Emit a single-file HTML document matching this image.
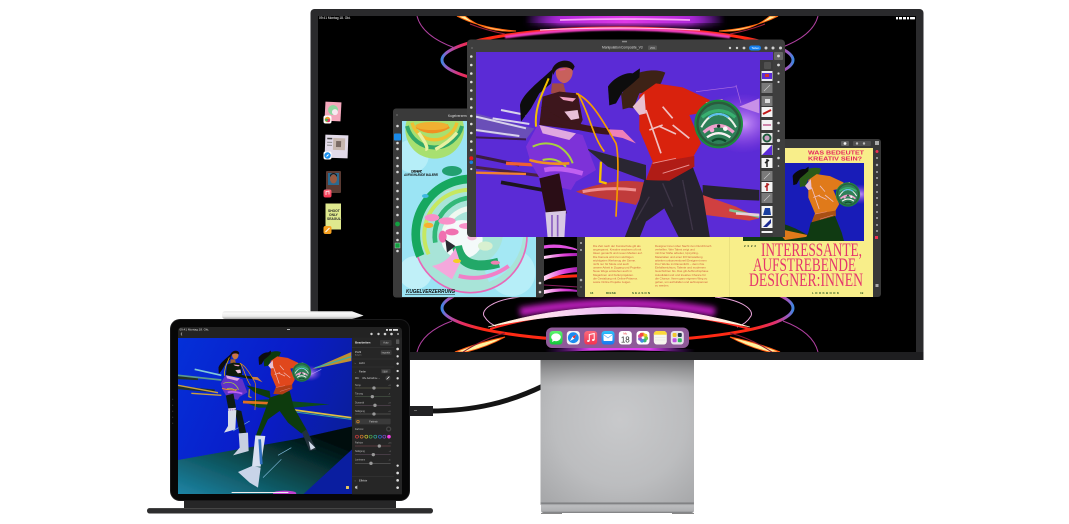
<!DOCTYPE html>
<html lang="de"><head><meta charset="utf-8"><title>iPad und Studio Display</title>
<style>
html,body{margin:0;padding:0;background:#fff;width:1069px;height:524px;overflow:hidden}
svg{display:block;font-family:"Liberation Sans",sans-serif}
</style></head><body>
<svg width="1069" height="524" viewBox="0 0 1069 524" xmlns="http://www.w3.org/2000/svg" xmlns:xlink="http://www.w3.org/1999/xlink">
<defs>
<linearGradient id="ring" gradientUnits="userSpaceOnUse" x1="442" y1="0" x2="793" y2="0">
<stop offset="0" stop-color="#3f86e0"/><stop offset=".012" stop-color="#9060c8"/><stop offset=".05" stop-color="#e03070"/><stop offset=".12" stop-color="#ff2a14"/><stop offset=".88" stop-color="#ff2a14"/><stop offset=".95" stop-color="#e03070"/><stop offset=".988" stop-color="#9060c8"/><stop offset="1" stop-color="#3f86e0"/>
</linearGradient>
<linearGradient id="band" gradientUnits="userSpaceOnUse" x1="490" y1="0" x2="750" y2="0">
<stop offset="0" stop-color="#fff6d0"/><stop offset=".22" stop-color="#ffe0f0"/><stop offset=".5" stop-color="#e8b4f4"/><stop offset=".78" stop-color="#ffe0f0"/><stop offset="1" stop-color="#fff6d0"/>
</linearGradient>
<linearGradient id="topband" gradientUnits="userSpaceOnUse" x1="525" y1="0" x2="725" y2="0">
<stop offset="0" stop-color="#7a20c0" stop-opacity="0"/><stop offset=".18" stop-color="#b028d8"/><stop offset=".5" stop-color="#e038e8"/><stop offset=".82" stop-color="#b028d8"/><stop offset="1" stop-color="#7a20c0" stop-opacity="0"/>
</linearGradient>
<linearGradient id="botband" gradientUnits="userSpaceOnUse" x1="545" y1="0" x2="695" y2="0">
<stop offset="0" stop-color="#7a20c0" stop-opacity="0"/><stop offset=".3" stop-color="#e040f0"/><stop offset=".7" stop-color="#e040f0"/><stop offset="1" stop-color="#7a20c0" stop-opacity="0"/>
</linearGradient>
<linearGradient id="streak" x1="0" y1="0" x2="1" y2="0">
<stop offset="0" stop-color="#ffd8f4"/><stop offset=".6" stop-color="#e040d8"/><stop offset="1" stop-color="#a020b0"/>
</linearGradient>
<radialGradient id="standg" gradientUnits="userSpaceOnUse" cx="620" cy="420" r="110">
<stop offset="0" stop-color="#c8c9cb"/><stop offset=".6" stop-color="#bcbdbf"/><stop offset="1" stop-color="#a7a8aa"/>
</radialGradient>
<linearGradient id="standtop" x1="0" y1="0" x2="0" y2="1">
<stop offset="0" stop-color="#666668" stop-opacity=".85"/><stop offset="1" stop-color="#888" stop-opacity="0"/>
</linearGradient>
<linearGradient id="foot" x1="0" y1="0" x2="0" y2="1">
<stop offset="0" stop-color="#808183"/><stop offset=".25" stop-color="#bcbdbf"/><stop offset=".8" stop-color="#aeafb1"/><stop offset="1" stop-color="#77787a"/>
</linearGradient>
<linearGradient id="pen" x1="0" y1="0" x2="0" y2="1">
<stop offset="0" stop-color="#e4e4e4"/><stop offset=".25" stop-color="#f8f8f8"/><stop offset=".65" stop-color="#ececec"/><stop offset="1" stop-color="#a8a8a8"/>
</linearGradient>
<linearGradient id="ipadbg" x1="0" y1="0" x2="1" y2=".4">
<stop offset="0" stop-color="#0430d8"/><stop offset=".6" stop-color="#0a1cc8"/><stop offset="1" stop-color="#0a1ea0"/>
</linearGradient>
<linearGradient id="floor" x1="0" y1="1" x2="1" y2="0">
<stop offset="0" stop-color="#1e86a8"/><stop offset=".45" stop-color="#0a4a4e"/><stop offset=".85" stop-color="#020a0a"/>
</linearGradient>
<linearGradient id="msg" x1="0" y1="0" x2="0" y2="1"><stop offset="0" stop-color="#5df56c"/><stop offset="1" stop-color="#12c53a"/></linearGradient>
<linearGradient id="mus" x1="0" y1="0" x2="0" y2="1"><stop offset="0" stop-color="#fb6a7c"/><stop offset="1" stop-color="#f43350"/></linearGradient>
<linearGradient id="mail" x1="0" y1="0" x2="0" y2="1"><stop offset="0" stop-color="#2ec4fb"/><stop offset="1" stop-color="#1a76f0"/></linearGradient>
<radialGradient id="glow"><stop offset="0" stop-color="#d8a4ff" stop-opacity=".9"/><stop offset="1" stop-color="#a040e0" stop-opacity="0"/></radialGradient>
<filter id="b1" x="-30%" y="-200%" width="160%" height="500%"><feGaussianBlur stdDeviation="3"/></filter>
<filter id="b2" x="-10%" y="-30%" width="120%" height="160%"><feGaussianBlur stdDeviation=".8"/></filter>
<filter id="b3" x="-10%" y="-10%" width="120%" height="120%"><feGaussianBlur stdDeviation="1"/></filter>
<clipPath id="cMain"><rect x="476" y="52" width="309" height="185"/></clipPath>
<clipPath id="cFresco"><rect x="402" y="121" width="134" height="176"/></clipPath>
<clipPath id="cMag"><rect x="743" y="163" width="121" height="78"/></clipPath>
<clipPath id="cIpad"><rect x="178" y="338" width="174" height="156"/></clipPath>
<clipPath id="cScreen"><rect x="318" y="16" width="598" height="336"/></clipPath>

<g id="orb">
<circle r="70" fill="#2a5a3e" stroke="#1c8a3c" stroke-width="6"/>
<circle r="60" fill="#2f8058"/>
<path d="M-50 -20Q0 -60 50 -20" stroke="#38b070" stroke-width="10" fill="none"/>
<path d="M-52 10Q-30 -30 0 -30Q30 -30 52 10" stroke="#eef2ea" stroke-width="6" fill="none"/>
<path d="M-30 -20Q0 -40 30 -20" stroke="#5ac0f0" stroke-width="6" fill="none"/>
<path d="M-45 25Q0 -15 45 25" stroke="#f0a0cc" stroke-width="10" fill="none"/>
<path d="M-35 40Q0 15 35 40" stroke="#f8f2f2" stroke-width="7" fill="none"/>
<path d="M-20 52Q0 38 22 52" stroke="#0f4a2a" stroke-width="7" fill="none"/>
<circle cx="-20" cy="18" r="7" fill="#f4a8d4"/><circle cx="20" cy="14" r="7" fill="#f8f8f8"/><circle cx="0" cy="6" r="5" fill="#20242a"/>
</g>

<g id="woman">
<path d="M232 55C190 95 140 130 132 165L135 215L165 175L190 130L225 100Z" fill="#0c0808"/>
<path d="M218 85C200 130 175 170 180 230" stroke="#f2c000" stroke-width="6" fill="none"/>
<path d="M228 100L262 100L270 130L225 130Z" fill="var(--skin2)"/>
<path d="M200 140L250 125L305 130L320 210L305 240L190 225Z" fill="var(--top)"/>
<path d="M205 170C210 210 300 235 400 245" stroke="var(--top)" stroke-width="19" fill="none"/>
<path d="M250 140L300 145L290 155L262 150Z" fill="#f0a0c0"/>
<path d="M265 185L305 180L310 205L285 210Z" fill="#e8c0d8"/>
<path d="M398 238L440 240L480 280L440 264L408 258Z" fill="var(--hand)"/>
<path d="M150 290L185 225L320 255L360 360L300 395L285 420L200 400L165 340Z" fill="var(--skirt)"/>
<path d="M190 225L300 250L280 270L200 250Z" fill="#e0a8e0"/>
<path d="M170 290Q210 270 250 290M250 290Q280 310 290 340M200 330Q240 320 270 350" stroke="#a8d040" stroke-width="6" fill="none"/>
<path d="M160 330Q215 345 280 340" stroke="#f09020" stroke-width="8" fill="none"/>
<path d="M205 360Q250 350 320 370" stroke="#c060f0" stroke-width="14" fill="none"/>
<path d="M190 385L250 370L272 490L210 490Z" fill="var(--leg)"/>
<path d="M208 487L270 482L265 565L215 565Z" fill="#d8c8e4"/>
<path d="M228 495V560M245 495V560" stroke="#8a60c0" stroke-width="5"/>
<path d="M228 60C235 30 285 20 296 50L290 62C260 45 240 50 232 75Z" fill="#120c0e"/>
<path d="M240 62C255 48 285 50 290 62C292 85 272 105 258 98C245 92 238 80 240 62Z" fill="var(--skin)"/>
<path d="M250 60L268 58" stroke="#e050a0" stroke-width="4"/>
<path d="M300 130C350 150 390 230 420 280C430 320 425 400 420 500" stroke="#f59a00" stroke-width="5" fill="none"/>
<path d="M305 130C340 190 350 260 385 305" stroke="#f5a800" stroke-width="5" fill="none"/>
<path d="M375 335L372 395L392 400" stroke="#f5c000" stroke-width="7" fill="none"/>
</g>

<g id="man">
<path d="M440 90C490 60 540 55 568 68L555 100L520 125L490 130L472 175L440 170Z" fill="var(--hair)"/>
<path d="M435 130L470 125L470 170L440 178Z" fill="var(--hair)"/>
<path d="M490 135L540 100L620 112L702 150L668 190L640 195L675 280L652 320L655 350L580 392L510 390L530 335L490 240Z" fill="var(--jacket)"/>
<path d="M530 340L655 318L655 350L580 392L510 390Z" fill="var(--jacket2)"/>
<path d="M510 180L555 310M548 228L600 252M560 170L590 205M590 225L640 265M520 240L560 225" stroke="#f0c0c0" stroke-width="5" fill="none"/>
<path d="M530 340L600 325M560 370L640 345" stroke="#e89090" stroke-width="3" fill="none"/>
<path d="M470 170L505 130L510 190L490 195Z" fill="#e8c0d0"/>
<path d="M396 110C410 85 450 65 470 70L492 55L490 82L470 100L440 125L420 160L400 166Z" fill="#0a0a0c"/>
<path d="M690 160L740 150" stroke="#e8a0b0" stroke-width="6"/>
<use xlink:href="#orb" transform="translate(728 222)"/>
</g>
</defs>

<!-- cable behind -->
<path d="M430 411C475 411 510 402 543 386" stroke="#141414" stroke-width="5" fill="none"/>
<rect x="409" y="406" width="24" height="10" fill="#222224"/>
<path d="M414 410.500h3" stroke="#888" stroke-width=".7"/>

<!-- stand -->
<rect x="540.500" y="359" width="153.500" height="146" fill="url(#standg)"/>
<rect x="540.500" y="359" width="153.500" height="28" fill="url(#standtop)"/>
<rect x="541" y="503" width="153" height="10" rx="2.500" fill="url(#foot)"/>
<rect x="540.500" y="502.500" width="153.500" height="1.200" fill="#7a7b7d"/>
<rect x="541" y="513" width="21" height="1" fill="#888"/><rect x="672" y="513" width="22" height="1" fill="#888"/>

<!-- monitor -->
<rect x="310.500" y="9" width="613" height="351" rx="4" fill="#2a2a2c"/>
<rect x="310.500" y="352" width="613" height="8" fill="#1e1e20"/>
<rect x="318" y="16" width="598" height="336" fill="#000"/>

<!-- wallpaper -->
<g clip-path="url(#cScreen)">
<rect x="525" y="15" width="200" height="11" fill="url(#topband)" filter="url(#b1)"/>
<rect x="525" y="16" width="200" height="7" fill="url(#topband)"/>
<path d="M560 20Q620 18 690 20" stroke="#f8a0f8" stroke-width="1.800" fill="none"/>
<ellipse cx="617.500" cy="60" rx="175.500" ry="32" fill="none" stroke="url(#ring)" stroke-width="3"/>
<path d="M505 37Q620 21 730 37" stroke="#f040c0" stroke-width="3" fill="none" filter="url(#b2)"/>
<path d="M540 30Q620 26 700 30" stroke="#ffc0ec" stroke-width="1.200" fill="none"/>
<path d="M457 16Q480 28 516 31Q485 33 465 16Z" fill="#fff2a0" stroke="#ff6a10" stroke-width="1"/>
<path d="M778 16Q755 28 719 31Q750 33 770 16Z" fill="#fff2a0" stroke="#ff6a10" stroke-width="1"/>
<path d="M417 16Q422 36 455 48" stroke="#b040a0" stroke-width="1" fill="none"/>
<path d="M818 16Q813 36 780 48" stroke="#b040a0" stroke-width="1" fill="none"/>
<path d="M470 24Q485 30 505 34M765 24Q750 30 730 34" stroke="#a02040" stroke-width="1" fill="none"/>

<path d="M520 297C492 300 481 310 484 316C487 321 492 325 498 327M715 297C743 300 754 310 751 316C748 321 743 325 737 327" fill="none" stroke="#eca4dc" stroke-width="1"/>
<path d="M520 312Q620 295 715 312" stroke="#d020d0" stroke-width="9" fill="none" filter="url(#b1)" opacity=".9"/>
<path d="M490 329Q530 317 575 313M750 329Q705 317 660 313" stroke="#ff2a20" stroke-width="2" fill="none"/>
<path d="M488 327Q620 287 750 327Q620 300 488 327Z" fill="url(#band)" stroke="url(#band)" stroke-width=".6"/>
<ellipse cx="617.500" cy="308" rx="175.500" ry="33" fill="none" stroke="url(#ring)" stroke-width="3"/>
<path d="M455 352Q480 342 505 337Q487 347 466 352Z" fill="#fff3a0" stroke="#ff5a10" stroke-width="1"/>
<path d="M780 352Q755 342 730 337Q748 347 769 352Z" fill="#fff3a0" stroke="#ff5a10" stroke-width="1"/>
<path d="M417 352Q422 332 452 321" stroke="#b040a0" stroke-width="1" fill="none"/>
<path d="M818 352Q813 332 783 321" stroke="#b040a0" stroke-width="1" fill="none"/>
<path d="M463 352Q485 338 505 333M772 352Q750 338 730 333" stroke="#8a1a3a" stroke-width="1" fill="none"/>
<path d="M545 351Q620 346 695 351" stroke="url(#botband)" stroke-width="3.500" fill="none"/>
</g>

<!-- stage manager -->
<g>
<g transform="rotate(3 333 111)">
<rect x="325" y="102" width="16" height="19" fill="#f4a8bc"/>
<circle cx="333" cy="110" r="5" fill="#8fd8a0"/><circle cx="335" cy="112" r="3" fill="#f8e8f0"/>
</g>
<rect x="323.500" y="115.500" width="8" height="8" rx="2" fill="#fff"/>
<circle cx="327.500" cy="119.500" r="2.800" fill="#f0a030"/><circle cx="328.500" cy="120.500" r="1.600" fill="#e03070"/><circle cx="326.500" cy="120" r="1.400" fill="#40b060"/>
<g transform="rotate(2 336 146)">
<rect x="325" y="135" width="23" height="23" fill="#e2dae8"/>
<rect x="333" y="138" width="12" height="12" fill="#c8b8b0"/><rect x="327" y="138" width="5" height="1.500" fill="#444"/><rect x="327" y="142" width="5" height="1" fill="#888"/><rect x="327" y="145" width="5" height="1" fill="#888"/><rect x="336" y="141" width="5" height="6" fill="#7a6a64"/>
</g>
<rect x="323.500" y="151.500" width="8" height="8" rx="2" fill="#fff"/><circle cx="327.500" cy="155.500" r="3.200" fill="#1a90f0"/><path d="M326 157L327 155L329 154L328 156Z" fill="#fff"/>
<rect x="326" y="171" width="15" height="22" rx="1" fill="#5a3a32"/>
<rect x="328" y="173" width="11" height="12" fill="#2a6a90"/><ellipse cx="333.500" cy="179" rx="3.500" ry="4.500" fill="#9a5a40"/><path d="M330 177Q333.500 171 337 177L337 175Q333.500 171 330 175Z" fill="#1a1210"/>
<rect x="323.500" y="189.500" width="8" height="8" rx="2" fill="url(#mus)"/><path d="M326 195V191.500L329 191V194.500" stroke="#fff" stroke-width=".7" fill="none"/>
<rect x="325.500" y="203.500" width="15.500" height="26" fill="#dfe98e"/>
<text x="328" y="212" font-size="3.300" font-weight="700" fill="#222">SHOOT</text><text x="329" y="216" font-size="3.300" font-weight="700" fill="#222">ONLY</text><text x="327" y="220" font-size="3.300" font-weight="700" fill="#222">SEAGULL</text>
<rect x="323.500" y="226" width="8" height="8" rx="2" fill="#f6a020"/><path d="M325.500 232L329.500 228" stroke="#fff" stroke-width="1"/>
</g>

<!-- between-window streaks -->
<g>
<path d="M544 246Q560 243 578 250Q560 246 544 248Z" fill="#e050e0" stroke="#e050e0" stroke-width="1.200"/>
<path d="M544 256Q560 253 578 253L578 256Q560 256 544 259Z" fill="url(#streak)"/>
<path d="M544 276Q560 268 578 267L578 272Q560 273 544 281Z" fill="url(#streak)"/>
<path d="M544 290Q560 287 578 290L578 292Q560 290 544 294Z" fill="url(#streak)"/>
<path d="M544 285L578 287" stroke="#8a2060" stroke-width="1"/>
</g>

<!-- fresco window -->
<rect x="393" y="108.500" width="151" height="189" rx="3" fill="#3a3a3a"/>
<rect x="402" y="121" width="134" height="176" fill="#9be4f4"/>
<g clip-path="url(#cFresco)"><g transform="translate(392 106) scale(.3333)" filter="url(#b3)">
<circle cx="60" cy="150" r="50" fill="#b6eef8"/><circle cx="360" cy="500" r="70" fill="#b6eef8"/><circle cx="70" cy="500" r="50" fill="#c0f0f8"/>
<circle cx="128" cy="70" r="88" fill="#a8e070"/>
<path d="M45 60A85 85 0 0 0 210 60" stroke="#30a868" stroke-width="12" fill="none"/>
<path d="M60 50A70 70 0 0 0 195 50" stroke="#f0c030" stroke-width="10" fill="none"/>
<path d="M75 60Q120 90 170 60" stroke="#f09020" stroke-width="14" fill="none"/>
<path d="M80 80Q115 130 100 130" stroke="#e8f0a0" stroke-width="10" fill="none"/>
<path d="M130 130Q170 110 195 80" stroke="#e8f0a0" stroke-width="10" fill="none"/>
<ellipse cx="120" cy="60" rx="50" ry="12" fill="#f0b030"/>
<ellipse cx="180" cy="195" rx="30" ry="15" fill="#20a070"/>
<circle cx="235" cy="390" r="170" fill="#a8e4d8" stroke="#e868b8" stroke-width="5"/>
<path d="M85 450A165 165 0 0 1 280 225" stroke="#18a860" stroke-width="26" fill="none"/>
<path d="M110 445A135 135 0 0 1 290 265" stroke="#c6e860" stroke-width="12" fill="none"/>
<path d="M130 410A115 115 0 0 1 300 290" stroke="#30b878" stroke-width="14" fill="none"/>
<path d="M155 395A90 90 0 0 1 270 310" stroke="#f0f8f0" stroke-width="16" fill="none"/>
<ellipse cx="210" cy="400" rx="62" ry="58" fill="#f4fafa"/>
<path d="M360 350A130 130 0 0 1 280 500" stroke="#a4e8f4" stroke-width="60" fill="none"/>
<path d="M195 420Q210 500 320 470" stroke="#20a868" stroke-width="30" fill="none"/>
<path d="M190 425L205 470L180 520L120 480Q170 470 190 425Z" fill="#f4a8dc"/>
<path d="M200 510Q280 530 350 480" stroke="#f080c8" stroke-width="12" fill="none"/>
<ellipse cx="120" cy="335" rx="22" ry="11" fill="#f890c8"/><ellipse cx="110" cy="358" rx="14" ry="8" fill="#f8b030"/><ellipse cx="165" cy="345" rx="26" ry="11" fill="#f890c8"/><ellipse cx="180" cy="378" rx="20" ry="10" fill="#f070b0"/><ellipse cx="225" cy="360" rx="24" ry="9" fill="#f890c8"/><ellipse cx="152" cy="392" rx="12" ry="18" fill="#f070b0"/><ellipse cx="240" cy="395" rx="14" ry="8" fill="#f4b8d8"/>
<path d="M160 400L190 420L165 440Z" fill="#2a2a30"/>
<ellipse cx="195" cy="465" rx="12" ry="6" fill="#f4d020"/><ellipse cx="310" cy="470" rx="14" ry="6" fill="#f080b0"/><ellipse cx="280" cy="420" rx="22" ry="14" fill="#d8f0d0"/>
<ellipse cx="100" cy="270" rx="10" ry="6" fill="#40b8e0"/>
</g>
<text x="411" y="172.500" font-size="3.400" font-weight="700" font-style="italic" fill="#111" textLength="11">DAS HERZ</text>
<text x="404" y="176" font-size="3.200" font-weight="700" font-style="italic" fill="#111" textLength="34" lengthAdjust="spacingAndGlyphs">AUFWÜHLENDE MALEREI</text>
<text x="406" y="293" font-size="5.600" font-weight="700" font-style="italic" fill="#111" textLength="49" lengthAdjust="spacingAndGlyphs">KUGELVERZERRUNG</text>
<path d="M405 294.700H455" stroke="#111" stroke-width=".5"/>
</g>
<text x="448" y="117" font-size="3.200" fill="#ddd">Kugelverzerrung</text>
<path d="M397.500 114l-1 1 1 1" stroke="#aaa" stroke-width=".5" fill="none"/>
<rect x="394" y="133.500" width="7" height="7" rx="1" fill="#1a8ae8"/>
<g fill="#d8d8d8"><circle cx="397.500" cy="126" r="1.300"/><circle cx="397.500" cy="143" r="1.300"/><circle cx="397.500" cy="149" r="1.300"/><circle cx="397.500" cy="158" r="1.300"/><circle cx="397.500" cy="166" r="1.300"/><circle cx="397.500" cy="172" r="1.300"/><circle cx="397.500" cy="183" r="1.300"/><circle cx="397.500" cy="191" r="1.300"/><circle cx="397.500" cy="199" r="1.300"/><circle cx="397.500" cy="207" r="1.300"/><circle cx="397.500" cy="215" r="1.300"/><circle cx="397.500" cy="233" r="1.300"/><circle cx="397.500" cy="240" r="1.300"/><circle cx="397.500" cy="251" r="1.300"/><circle cx="540" cy="283" r="1.300"/><circle cx="540" cy="292" r="1.300"/></g>
<circle cx="397.500" cy="224" r="2.400" fill="#12a040"/>
<rect x="395" y="243" width="5" height="5" fill="#12a040" stroke="#ddd" stroke-width=".4"/>

<!-- magazine window -->
<rect x="577" y="139" width="304" height="158" rx="3" fill="#383838"/>
<rect x="585" y="148" width="288" height="149" fill="#f8ee8a"/>
<rect x="743" y="163" width="121" height="78" fill="#181cb8"/>
<g clip-path="url(#cMag)">
<path d="M743 225Q775 212 815 240L743 245Z" fill="#123a14"/>
<path d="M775 228L812 236L785 240Z" fill="#e07a1a"/>
<g transform="translate(775 135) scale(.3333)"><g transform="translate(-145 67.500) scale(.5)" style="--jacket:#e07a1a;--jacket2:#a85014;--hair:#2a5a18">
<ellipse cx="800" cy="220" rx="100" ry="60" fill="url(#glow)"/>
<use xlink:href="#man"/>
<path d="M505 390L650 350L690 450L720 560L440 560L490 450Z" fill="#103a12"/>
</g></g>
</g>
<text x="808" y="154.500" font-size="5.200" font-weight="700" fill="#e5265e" textLength="56" lengthAdjust="spacingAndGlyphs">WAS BEDEUTET</text>
<text x="808" y="160.300" font-size="5.200" font-weight="700" fill="#e5265e" textLength="54" lengthAdjust="spacingAndGlyphs">KREATIV SEIN?</text>
<g font-family="'Liberation Serif',serif" font-size="19" fill="#e5366c">
<text x="761" y="256" textLength="101" lengthAdjust="spacingAndGlyphs">INTERESSANTE,</text>
<text x="753" y="271" textLength="103" lengthAdjust="spacingAndGlyphs">AUFSTREBENDE</text>
<text x="749" y="286" textLength="114" lengthAdjust="spacingAndGlyphs">DESIGNER:INNEN</text>
</g>
<path d="M729.500 237V297" stroke="#e2d878" stroke-width=".6"/>
<text x="744" y="247" font-size="3" font-weight="700" fill="#26461e" textLength="12">2022</text>
<g font-size="2.900" fill="#d2603c">
<text x="593" y="247">Die Zeit nach der Kunstschule gilt als</text>
<text x="593" y="250.600">angespannt. Kreative wachsen oft mit</text>
<text x="593" y="254.200">Ideen gemacht und neuen Medien auf.</text>
<text x="593" y="257.800">Die Kamera wird zum wichtigen</text>
<text x="593" y="261.400">wichtigsten Werkzeug der Szene.</text>
<text x="593" y="265">nicht nur für Mode und auch</text>
<text x="593" y="268.600">unsere Arbeit in Zugang und Projekte.</text>
<text x="593" y="272.200">Neue Wege entstehen auch in</text>
<text x="593" y="275.800">Magazinen und Kulturprojekten.</text>
<text x="593" y="279.400">die Gestaltung mit Online-Präsenz.</text>
<text x="593" y="283">sowie Online Projekte zeigen.</text>
<text x="655" y="247">Designer:innen über Nacht zum Durchbruch</text>
<text x="655" y="250.600">verhelfen. Wer Talent zeigt und</text>
<text x="655" y="254.200">mit ihrer Nähe arbeitet, Upcycling-</text>
<text x="655" y="257.800">Materialien und einer DIY-Einstellung</text>
<text x="655" y="261.400">arbeiten unkonventionell Designer:innen</text>
<text x="655" y="265">ihrer Werke im Ramenlicht – denn ihre</text>
<text x="655" y="268.600">Einfallsreichtum, Talente und modernen</text>
<text x="655" y="272.200">Geschichten bis. Das gilt Aufbruchsphase</text>
<text x="655" y="275.800">Autodidakt und und kreative Chance für</text>
<text x="655" y="279.400">die Chance. Ihnen ganz eigenen Weg zu</text>
<text x="655" y="283">gehen, um aufzufallen und aufzuspannen</text>
<text x="655" y="286.600">zu werden.</text>
</g>
<g font-size="3" font-weight="700" fill="#26561e">
<text x="590" y="294">16</text><text x="606" y="294" textLength="10">DIESE</text><text x="632" y="294" textLength="18">SEASON</text>
<text x="812" y="294" textLength="27">LOOKBOOK</text><text x="860" y="294">19</text>
</g>
<rect x="841" y="141" width="8" height="5" rx="1" fill="#606060"/><rect x="853" y="141" width="18" height="5" rx="1" fill="#505050"/>
<circle cx="845" cy="143.500" r="1.400" fill="#eee"/><circle cx="857" cy="143.500" r="1.200" fill="#bbb"/><circle cx="864" cy="143.500" r="1.200" fill="#bbb"/>
<rect x="875" y="141" width="4" height="4" fill="#aaa"/>
<circle cx="877" cy="151.500" r="1.500" fill="#f03050"/>
<g fill="#b0b0b0"><circle cx="877" cy="158" r="1"/><circle cx="877" cy="165" r="1.200"/><circle cx="877" cy="172" r="1"/><circle cx="877" cy="178" r="1"/><circle cx="877" cy="185" r="1"/><circle cx="877" cy="192" r="1"/><circle cx="877" cy="198" r="1"/><circle cx="877" cy="205" r="1"/><circle cx="877" cy="212" r="1"/><circle cx="877" cy="218" r="1"/><circle cx="877" cy="225" r="1"/><circle cx="877" cy="231" r="1"/><circle cx="581" cy="243" r="1"/><circle cx="581" cy="250" r="1"/><circle cx="581" cy="280" r="1.300"/><circle cx="581" cy="287" r=".6"/></g>
<rect x="875" y="236" width="3" height="3" fill="#f03050"/><rect x="875.500" y="284" width="3" height="3" fill="#aaa"/>

<!-- main window -->
<rect x="467" y="39.500" width="318" height="197.500" rx="4" fill="#3e3e3e"/>
<rect x="476" y="52" width="309" height="185" fill="#5b2bd6"/>
<g clip-path="url(#cMain)"><g transform="translate(476 50) scale(.3333)" filter="url(#b2)">
<ellipse cx="800" cy="220" rx="120" ry="90" fill="url(#glow)"/>
<path d="M0 190C60 205 120 225 175 235L150 268C100 260 40 250 0 245Z" fill="#6a50b8"/>
<path d="M0 200L150 235M0 240L130 258M75 180L150 195M50 205L160 222" stroke="#d8d2ec" stroke-width="6" fill="none"/>
<path d="M0 262L150 268" stroke="#3a1a50" stroke-width="6"/>
<path d="M0 318L130 345" stroke="#3a1a40" stroke-width="9"/>
<path d="M0 352L200 378" stroke="#4a2040" stroke-width="9"/>
<path d="M0 368L150 372" stroke="#f08030" stroke-width="7"/>
<path d="M90 340L180 345" stroke="#f06030" stroke-width="10"/>
<path d="M75 397L200 420" stroke="#1e141f" stroke-width="11"/>
<path d="M330 295L510 345L510 392L395 350Z" fill="#2b2630"/>
<path d="M300 425C380 395 450 385 520 400L480 465C420 450 350 445 300 425Z" fill="#c03a3a"/>
<path d="M320 425Q400 410 480 420" stroke="#f09090" stroke-width="9" fill="none"/>
<path d="M680 405L850 420L850 452L680 445Z" fill="#26222e"/>
<path d="M680 435L780 470L850 505L820 512L690 495Z" fill="#d04040"/>
<path d="M760 480L850 500" stroke="#80c090" stroke-width="8"/><path d="M780 490L850 495" stroke="#e8d0d8" stroke-width="8"/>
<path d="M780 105L795 160M660 125L780 110" stroke="#b070e0" stroke-width="2" fill="none"/>
<path d="M790 170L850 145L850 190Z" fill="#c890e8"/>
<g style="--skin:#c8605c;--skin2:#a04844;--top:#3c131a;--hand:#ee80b8;--skirt:#7d32d8;--leg:#2a0e12"><use xlink:href="#woman"/></g>
<path d="M505 390L650 350L680 430L702 565L610 565L565 475L510 515L490 565L445 565L490 450Z" fill="#26202e"/>
<path d="M560 400L590 470M620 390L650 540M480 510L520 440" stroke="#3e3646" stroke-width="4" fill="none"/>
<g style="--jacket:#d9200f;--jacket2:#b01a14;--hair:#3c2118"><use xlink:href="#man"/></g>
</g></g>
<!-- main chrome -->
<text x="602" y="48.500" font-size="3.300" fill="#ddd">Manipulation</text>
<text x="621" y="48.500" font-size="3.300" fill="#ddd">Composite_V3</text>
<rect x="648" y="45.500" width="9" height="4.500" rx="1" fill="#555"/>
<text x="650" y="48.800" font-size="2.600" fill="#ccc">25%</text>
<rect x="622" y="40.800" width="5" height="1.500" fill="#888"/>
<rect x="749" y="45.500" width="12" height="5" rx="2.500" fill="#1480f0"/>
<text x="751.500" y="49" font-size="3" fill="#fff">Teilen</text>
<g fill="#cfcfcf"><circle cx="730" cy="48" r="1.200"/><circle cx="737" cy="48" r="1.200"/><circle cx="744" cy="48" r="1.400"/><circle cx="766" cy="48" r="1.500"/><circle cx="773" cy="48" r="1.500"/><circle cx="780.500" cy="48" r="1.500"/></g>
<rect x="760" y="60" width="13" height="177" fill="#3a3a3a"/>
<rect x="773" y="52" width="12" height="185" fill="#3e3e3e"/>
<rect x="764" y="62" width="7" height="7" rx="1" fill="#505050"/>
<rect x="761.500" y="71" width="11" height="10" fill="#e8e8f0"/><rect x="762" y="73" width="10" height="6" fill="#5b2bd6"/><rect x="765" y="74" width="4" height="3" fill="#d03030"/>
<rect x="761.500" y="83" width="11" height="10" fill="#7a7a7a"/><path d="M764 91L770 85" stroke="#ccc" stroke-width=".6"/>
<rect x="761.500" y="96" width="11" height="10" fill="#7a7a7a"/><rect x="765" y="99" width="5" height="4" fill="#ddd"/>
<rect x="761.500" y="107" width="11" height="10" fill="#f4f4f4"/><path d="M763 114L771 110" stroke="#c01818" stroke-width="2"/>
<rect x="761.500" y="120" width="11" height="10" fill="#f4f4f4"/><path d="M763 125H771" stroke="#c06090" stroke-width="1.500"/>
<rect x="761.500" y="133" width="11" height="10" fill="#e8e8e8"/><circle cx="767" cy="138" r="4.500" fill="#1c5a3a"/><circle cx="767" cy="138" r="2.600" fill="#c8a0c0"/>
<rect x="761.500" y="145" width="11" height="10" fill="#f4f4f4"/><path d="M762 155L772 145V155Z" fill="#5b2bd6"/>
<rect x="761.500" y="158" width="11" height="10" fill="#f4f4f4"/><path d="M767 159V167M765 163L769 160" stroke="#222" stroke-width="1.500"/>
<rect x="761.500" y="171" width="11" height="10" fill="#7a7a7a"/><path d="M764 179L770 173" stroke="#ccc" stroke-width=".6"/>
<rect x="761.500" y="182" width="11" height="10" fill="#f4f4f4"/><path d="M767 183V191M765 187L769 184" stroke="#b02020" stroke-width="1.500"/>
<rect x="761.500" y="193" width="11" height="10" fill="#7a7a7a"/><path d="M764 201L770 195" stroke="#ccc" stroke-width=".6"/>
<rect x="761.500" y="206" width="11" height="10" fill="#f4f4f4"/><path d="M763 215L765 208H770L771 215Z" fill="#1a40a0"/>
<rect x="761.500" y="218" width="11" height="10" fill="#f4f4f4"/><path d="M763 227L771 219V223L767 227Z" fill="#1a2a90"/>
<rect x="761.500" y="231" width="11" height="2" fill="#f4f4f4"/>
<rect x="774" y="52" width="9" height="8" rx="1" fill="#666"/>
<g fill="#d8d8d8"><circle cx="778.500" cy="56" r="1.400"/><circle cx="778.500" cy="65" r="1.400"/><circle cx="778.500" cy="73.500" r="1.100"/><circle cx="778.500" cy="82" r="1.100"/><circle cx="778.500" cy="123" r="1.300"/><circle cx="778.500" cy="131" r="1"/><circle cx="778.500" cy="140.500" r="1.600"/><circle cx="778.500" cy="149" r="1"/><circle cx="778.500" cy="158" r="1.300"/><circle cx="778.500" cy="166" r=".8"/></g>
<path d="M472.500 47l-1 1 1 1" stroke="#aaa" stroke-width=".5" fill="none"/>
<g fill="#dcdcdc"><circle cx="471.300" cy="56.500" r="1.300"/><circle cx="471.300" cy="65" r="1.300"/><circle cx="471.300" cy="73.500" r="1.300"/><circle cx="471.300" cy="82" r="1.300"/><circle cx="471.300" cy="90.500" r="1.300"/><circle cx="471.300" cy="99" r="1.300"/><circle cx="471.300" cy="107.500" r="1.300"/><circle cx="471.300" cy="116" r="1.300"/><circle cx="471.300" cy="124" r="1.300"/><circle cx="471.300" cy="133" r="1.300"/><circle cx="471.300" cy="141.500" r="1.300"/><circle cx="471.300" cy="150" r="1.300"/><circle cx="471.300" cy="169" r="1.100"/></g>
<circle cx="471.300" cy="158.300" r="2" fill="#e81818"/><circle cx="471.300" cy="162.300" r="1.800" fill="#1880d8"/>

<!-- status bar -->
<text x="319" y="19" font-size="3.200" fill="#fff">09:41  Montag 18. Okt.</text>
<g fill="#fff"><rect x="896" y="17" width="2" height="2.400"/><rect x="899" y="17" width="3" height="2.400"/><rect x="903" y="17" width="3" height="2.400"/><rect x="907" y="17" width="2" height="2.400"/><rect x="910" y="17" width="5" height="2.400" rx=".5"/></g>

<!-- dock -->
<rect x="546" y="327.500" width="143" height="20.500" rx="6" fill="#8f5a99"/>
<rect x="549.500" y="331" width="13" height="13.500" rx="3.200" fill="url(#msg)"/>
<ellipse cx="556" cy="337.300" rx="4.800" ry="3.900" fill="#fff"/><path d="M552.500 340L552 342L555 340.500Z" fill="#fff"/>
<rect x="566.800" y="331" width="13" height="13.500" rx="3.200" fill="#f4f4f6"/>
<circle cx="573.300" cy="337.700" r="5.400" fill="#1a8cf0"/><path d="M570 341L572.300 336.700L576.500 334.500L574.300 338.700Z" fill="#fff"/><path d="M572.300 336.700L576.500 334.500L574.300 338.700Z" fill="#f03030"/>
<rect x="584.200" y="331" width="13" height="13.500" rx="3.200" fill="url(#mus)"/>
<path d="M589.300 341V334.500L594.200 333.500V340" stroke="#fff" stroke-width="1" fill="none"/><ellipse cx="588.300" cy="341" rx="1.300" ry="1" fill="#fff"/><ellipse cx="593.200" cy="340" rx="1.300" ry="1" fill="#fff"/>
<rect x="601.500" y="331" width="13" height="13.500" rx="3.200" fill="url(#mail)"/>
<rect x="603.500" y="334" width="9" height="7" rx=".7" fill="#fff"/><path d="M603.500 334.500L608 338L612.500 334.500" stroke="#5aa8f0" stroke-width=".6" fill="none"/>
<rect x="618.800" y="331" width="13" height="13.500" rx="3.200" fill="#fff"/>
<text x="625.300" y="334.600" font-size="2.800" fill="#f03030" text-anchor="middle">Mo</text>
<text x="625.300" y="342.500" font-size="8" fill="#333" text-anchor="middle">18</text>
<rect x="636.500" y="331" width="13" height="13.500" rx="3.200" fill="#fff"/>
<g transform="translate(643 337.700)"><circle cx="0" cy="-3.200" r="1.900" fill="#f5a623"/><circle cx="2.500" cy="-2" r="1.900" fill="#e8d020"/><circle cx="3.200" cy=".6" r="1.900" fill="#7cc840"/><circle cx="1.700" cy="2.800" r="1.900" fill="#38b878"/><circle cx="-1" cy="3.100" r="1.900" fill="#4090e0"/><circle cx="-3" cy="1.200" r="1.900" fill="#8060d0"/><circle cx="-3.100" cy="-1.500" r="1.900" fill="#d850a0"/><circle cx="-1.500" cy="-3" r="1.900" fill="#f04848"/></g>
<rect x="653.800" y="331" width="13" height="13.500" rx="3.200" fill="#f6f6ee"/>
<path d="M653.800 334.200a3.200 3.200 0 0 1 3.200-3.200h6.600a3.200 3.200 0 0 1 3.200 3.200v.6h-13z" fill="#fcd83a"/>
<path d="M655 337.500h10.500M655 340h10.500" stroke="#ddd" stroke-width=".5"/>
<rect x="670.800" y="331" width="13" height="13.500" rx="3.200" fill="#e8e2ec"/>
<rect x="672.600" y="333" width="4" height="4" rx="1" fill="#f0c830"/><rect x="677.800" y="333" width="4" height="4" rx="1" fill="#2a3a50"/><rect x="672.600" y="338.300" width="4" height="4" rx="1" fill="#c050e0"/><rect x="677.800" y="338.300" width="4" height="4" rx="1" fill="#30b860"/>

<!-- pencil -->
<path d="M225 311.200H352L363.500 315.500Q362 316.200 352 319H225Q222 319 222 315Q222 311.200 225 311.200Z" fill="url(#pen)"/>

<!-- keyboard -->
<rect x="184" y="500" width="212" height="9" fill="#262627"/>
<rect x="147" y="508" width="286" height="5.500" rx="2.600" fill="#2d2d2e"/>
<rect x="149" y="508" width="282" height="1" fill="#454545"/>

<!-- ipad -->
<rect x="170" y="319" width="240" height="182" rx="10" fill="#1a1a1b"/>
<rect x="171" y="320" width="238" height="180" rx="9" fill="#070707"/>
<rect x="178" y="327" width="224" height="167" rx="4" fill="#232323"/>
<rect x="178" y="338" width="174" height="156" fill="url(#ipadbg)"/>
<g clip-path="url(#cIpad)"><g transform="translate(178 336) scale(.3333)" filter="url(#b3)">
<path d="M0 372L350 310L528 270L528 335L370 480L0 480Z" fill="url(#floor)"/>
<path d="M300 358L340 335M215 255L165 285M255 425L310 370" stroke="#7fb8d8" stroke-width="2"/>
<path d="M0 125L60 128M0 155L110 165" stroke="#203028" stroke-width="9"/>
<path d="M50 100L130 118" stroke="#80c8d8" stroke-width="5"/>
<path d="M0 118L130 132" stroke="#5a9890" stroke-width="5" fill="none"/>
<path d="M0 148L120 170M40 172L130 178" stroke="#c8a040" stroke-width="4" fill="none"/>
<path d="M400 100L520 48L520 75Z" fill="#c09030"/><path d="M410 96L520 62" stroke="#40b0a0" stroke-width="4"/>
<path d="M190 195L270 190L455 205L350 215L240 215Z" fill="#0e4a1a"/>
<path d="M195 198L340 205" stroke="#e07020" stroke-width="8"/>
<path d="M350 222L520 245" stroke="#e0c040" stroke-width="5"/><path d="M352 228L520 250" stroke="#30a0a0" stroke-width="3"/>
<path d="M205 148L275 165L278 188L230 170Z" fill="#0e3a10"/>
<path d="M400 115L430 100" stroke="#90a0f0" stroke-width="2"/>
<ellipse cx="395" cy="112" rx="36" ry="24" fill="url(#glow)"/>
<g transform="translate(71.300 32.200) scale(.38)" style="--skin:#c87840;--skin2:#a06030;--top:#0b1a10;--hand:#d08040;--skirt:#6030c8;--leg:#0c1c12"><use xlink:href="#woman"/></g>
<path d="M170 220L190 225L205 292L185 292Z" fill="#0c1c12"/>
<path d="M182 292L210 290L212 345L165 358L185 335Z" fill="#c8d0e0"/>
<path d="M150 225L175 222L172 280L138 290L150 270Z" fill="#d8dce8"/>
<path d="M275 185L335 165L348 215L388 285L370 292L330 260L305 225L270 250L246 302L234 298L255 240Z" fill="#0e3a10"/>
<g transform="translate(87.200 22) scale(.39)" style="--jacket:#e0461a;--jacket2:#b03c14;--hair:#0a3a10"><use xlink:href="#man"/></g>
<path d="M232 298L262 300L248 392L222 392Z" fill="#d8e0f0"/>
<path d="M245 310L250 385" stroke="#3070c0" stroke-width="8"/>
<path d="M180 408L222 390L248 395L240 455L215 440Z" fill="#c8d4e8"/>
<path d="M385 280L415 340L395 345L372 290Z" fill="#22303a"/>
<path d="M392 315L412 335L398 342Z" fill="#cfd8e8"/>
<rect x="504" y="450" width="9" height="9" rx="1.500" fill="#e8c860"/>
<ellipse cx="320" cy="472" rx="35" ry="8" fill="#c040d0"/>
</g></g>
<rect x="231.500" y="492" width="57" height="1" rx=".5" fill="#eee"/>
<text x="179.500" y="330.500" font-size="3" fill="#ddd">09:41  Montag 18. Okt.</text>
<path d="M182 332.500l-1 1.500 1 1.500" stroke="#ccc" stroke-width=".6" fill="none"/>
<g fill="#ddd"><rect x="287" y="329" width="3" height=".8"/><rect x="386" y="329" width="2" height="1.800"/><rect x="389" y="329" width="3" height="1.800"/><rect x="393" y="329" width="5" height="1.800"/></g>
<g fill="#cfcfcf"><circle cx="371.500" cy="334" r="1.200"/><circle cx="378.500" cy="334" r="1.200"/><circle cx="385" cy="334" r="1.300"/><circle cx="391.500" cy="334" r="1.300"/><circle cx="398" cy="334" r=".9"/></g>
<g transform="translate(140 305) scale(.3333)">
<rect x="636" y="98" width="150" height="470" fill="#262626"/>
<path d="M636 128H762M636 162H762M636 186H762M636 514H762" stroke="#3a3a3a" stroke-width="1.500"/>
<text x="645" y="116" font-size="9" font-weight="700" fill="#eee">Bearbeiten</text>
<rect x="720" y="105" width="35" height="17" rx="3" fill="#383838"/><text x="730" y="116" font-size="7.500" fill="#ccc">Auto</text>
<text x="645" y="144" font-size="8" fill="#ddd">Profil</text><text x="645" y="152" font-size="6" fill="#888">Adaptiv</text>
<rect x="722" y="135" width="33" height="15" rx="3" fill="#383838"/><text x="725" y="146" font-size="7" fill="#ccc">Importie</text>
<text x="644" y="177" font-size="8" fill="#bbb">›</text><text x="657" y="177" font-size="8" fill="#ddd">Licht</text>
<text x="644" y="202" font-size="8" fill="#bbb">⌄</text><text x="657" y="202" font-size="8" fill="#ddd">Farbe</text>
<rect x="723" y="192" width="29" height="13" rx="3" fill="#383838"/><text x="727" y="202" font-size="7" fill="#ccc">S&amp;W</text>
<text x="645" y="222" font-size="7" fill="#ccc">WA:</text><text x="667" y="222" font-size="7" fill="#ccc">Wie Aufnahme ⌄</text>
<circle cx="744" cy="219" r="8" fill="#3a3a3a"/><path d="M740 223L748 215" stroke="#fff" stroke-width="2"/>
<text x="645" y="243" font-size="7" fill="#bbb">Temp.</text><text x="645" y="269" font-size="7" fill="#bbb">Tönung</text><text x="645" y="295" font-size="7" fill="#bbb">Dynamik</text><text x="645" y="321" font-size="7" fill="#bbb">Sättigung</text>
<text x="745" y="243" font-size="6" fill="#888">+8</text><text x="745" y="269" font-size="6" fill="#888">-3</text><text x="745" y="295" font-size="6" fill="#888">+8</text><text x="745" y="321" font-size="6" fill="#888">+6</text>
<g stroke-width="2"><path d="M645 249H752" stroke="#5a5a48"/><path d="M645 275H752" stroke="#4a5a48"/><path d="M645 301H752" stroke="#5a4a58"/><path d="M645 327H752" stroke="#5a5a58"/><path d="M645 423H752" stroke="#6a4048"/><path d="M645 449H752" stroke="#5a4a58"/><path d="M645 475H752" stroke="#606060"/></g>
<g fill="#999"><circle cx="702" cy="249" r="5"/><circle cx="697" cy="275" r="5"/><circle cx="705" cy="301" r="5"/><circle cx="702" cy="327" r="5"/><circle cx="718" cy="423" r="5"/><circle cx="700" cy="449" r="5"/><circle cx="693" cy="475" r="5"/></g>
<rect x="645" y="341" width="107" height="17" rx="3" fill="#3a3a3a"/><circle cx="654" cy="350" r="5" fill="#c08030"/><circle cx="654" cy="350" r="2.200" fill="#333"/>
<text x="688" y="353" font-size="7" fill="#ccc">Farbmix</text>
<text x="645" y="375" font-size="7" fill="#bbb">Farbmix</text><circle cx="746" cy="372" r="8" fill="#444"/><circle cx="746" cy="372" r="4" fill="#222"/>
<g fill="none" stroke-width="2"><circle cx="651" cy="395" r="4.500" stroke="#e04040"/><circle cx="665" cy="395" r="4.500" stroke="#e08030"/><circle cx="679" cy="395" r="4.500" stroke="#d8c830"/><circle cx="692" cy="395" r="4.500" stroke="#50b050"/><circle cx="706" cy="395" r="4.500" stroke="#30b0a0"/><circle cx="720" cy="395" r="4.500" stroke="#3070d8"/><circle cx="733" cy="395" r="4.500" stroke="#8050d0"/></g>
<circle cx="747" cy="395" r="5.500" fill="#f040e0"/>
<text x="645" y="415" font-size="7" fill="#bbb">Farbton</text><text x="645" y="441" font-size="7" fill="#bbb">Sättigung</text><text x="645" y="467" font-size="7" fill="#bbb">Luminanz</text>
<text x="744" y="415" font-size="6" fill="#888">+15</text><text x="746" y="441" font-size="6" fill="#888">+3</text><text x="746" y="467" font-size="6" fill="#888">-6</text>
<text x="644" y="530" font-size="8" fill="#bbb">›</text><text x="657" y="530" font-size="8" fill="#ddd">Effekte</text>
<path d="M645 544h3l4-3v12l-4-3h-3z" fill="#bbb"/>
<rect x="768" y="103" width="10" height="14" rx="2" fill="#555"/>
<g fill="#dcdcdc"><circle cx="773" cy="132" r="4"/><circle cx="773" cy="154" r="3.500"/><circle cx="773" cy="176" r="3.500"/><circle cx="773" cy="198" r="3.500"/><circle cx="773" cy="220" r="3.500"/><circle cx="773" cy="242" r="3.500"/><circle cx="773" cy="482" r="3.500"/><circle cx="773" cy="504" r="4"/><circle cx="773" cy="526" r="4"/><circle cx="773" cy="548" r="4"/></g>
<g fill="#2a2a2a"><circle cx="98" cy="283" r="2"/><circle cx="98" cy="301" r="2"/><circle cx="98" cy="319" r="2"/><circle cx="98" cy="337" r="2"/><circle cx="98" cy="355" r="2"/></g>
</g>
</svg>
</body></html>
